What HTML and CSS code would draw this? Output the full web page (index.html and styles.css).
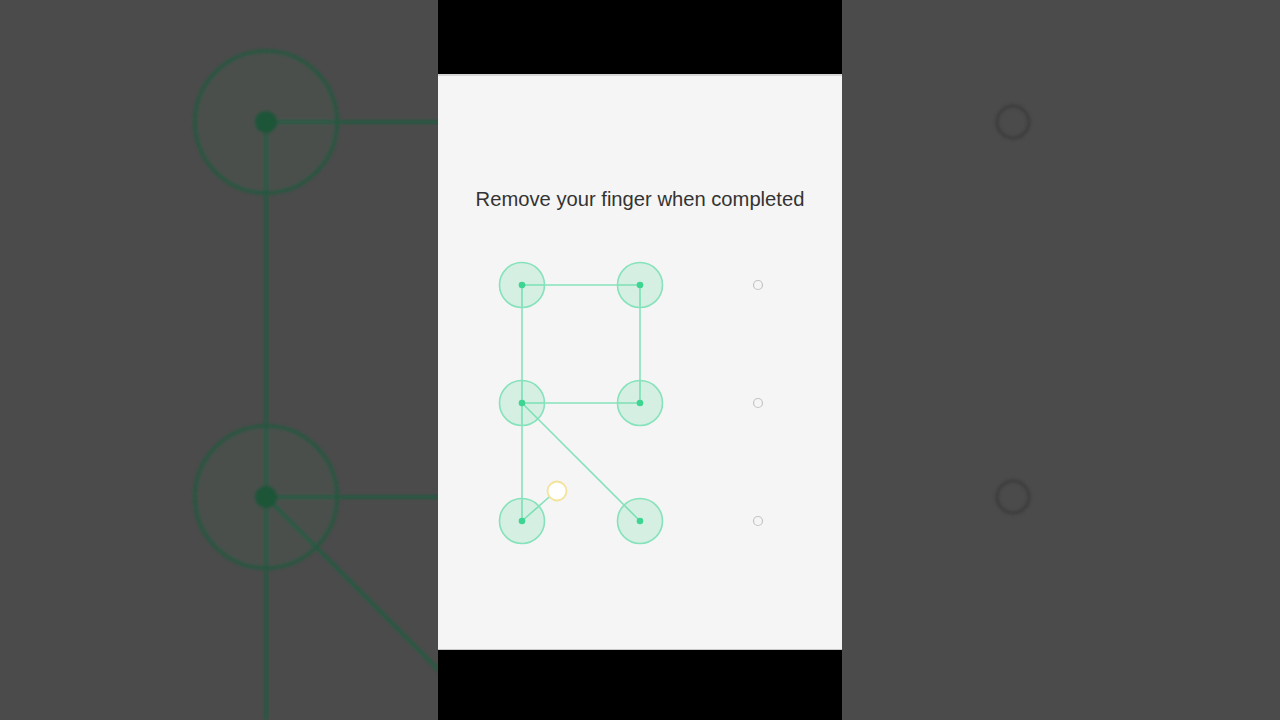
FILE: index.html
```html
<!DOCTYPE html>
<html>
<head>
<meta charset="utf-8">
<link rel="stylesheet" href="styles.css">
</head>
<body>
<svg class="backdrop" width="1280" height="720" viewBox="0 0 1280 720">
  <defs>
    <filter id="soft" x="-10%" y="-10%" width="120%" height="120%">
      <feGaussianBlur stdDeviation="1.5"/>
    </filter>
  </defs>
  <g filter="url(#soft)">
    <line x1="266" y1="122" x2="640" y2="122" stroke="#245a41" stroke-width="3.5"/>
    <line x1="266" y1="122" x2="266" y2="720" stroke="#245a41" stroke-width="3.5"/>
    <line x1="266" y1="497" x2="640" y2="497" stroke="#245a41" stroke-width="3.5"/>
    <line x1="266" y1="497" x2="640" y2="872" stroke="#245a41" stroke-width="3.5"/>
    <circle cx="266" cy="122" r="71" fill="#2f7a57" fill-opacity="0.08" stroke="#25573f" stroke-width="3.5"/>
    <circle cx="266" cy="497" r="71" fill="#2f7a57" fill-opacity="0.08" stroke="#25573f" stroke-width="3.5"/>
    <circle cx="266" cy="122" r="11" fill="#1b5439"/>
    <circle cx="266" cy="497" r="11" fill="#1b5439"/>
    <circle cx="1013" cy="122" r="16" fill="none" stroke="#3c3c3c" stroke-width="3.5"/>
    <circle cx="1013" cy="497" r="16" fill="none" stroke="#3c3c3c" stroke-width="3.5"/>
  </g>
</svg>
<div class="stage">
  <div class="side"></div>
  <div class="phone">
    <div class="bar-top"></div>
    <div class="panel">
      <h1 class="title">Remove your finger when completed</h1>
      <svg class="pattern" width="354" height="354" viewBox="0 0 354 354">
        <g stroke="#86e2bb" stroke-width="1.6" fill="none">
          <line x1="59" y1="59" x2="177" y2="59"/>
          <line x1="177" y1="59" x2="177" y2="177"/>
          <line x1="177" y1="177" x2="59" y2="177"/>
          <line x1="59" y1="59" x2="59" y2="295"/>
          <line x1="59" y1="177" x2="177" y2="295"/>
          <line x1="59" y1="295" x2="93" y2="265"/>
        </g>
        <g fill="#3ed98f" fill-opacity="0.17" stroke="#86e2bb" stroke-width="1.6">
          <circle cx="59" cy="59" r="22.5"/>
          <circle cx="177" cy="59" r="22.5"/>
          <circle cx="59" cy="177" r="22.5"/>
          <circle cx="177" cy="177" r="22.5"/>
          <circle cx="59" cy="295" r="22.5"/>
          <circle cx="177" cy="295" r="22.5"/>
        </g>
        <g fill="#3ed592">
          <circle cx="59" cy="59" r="3.3"/>
          <circle cx="177" cy="59" r="3.3"/>
          <circle cx="59" cy="177" r="3.3"/>
          <circle cx="177" cy="177" r="3.3"/>
          <circle cx="59" cy="295" r="3.3"/>
          <circle cx="177" cy="295" r="3.3"/>
        </g>
        <g fill="none" stroke="#c4c4c4" stroke-width="1.2">
          <circle cx="295" cy="59" r="4.5"/>
          <circle cx="295" cy="177" r="4.5"/>
          <circle cx="295" cy="295" r="4.5"/>
        </g>
        <circle cx="94" cy="265" r="9.5" fill="#ffffff" stroke="#f3e39a" stroke-width="1.8"/>
      </svg>
    </div>
    <div class="bar-bottom"></div>
  </div>
  <div class="side"></div>
</div>
</body>
</html>
```
FILE: styles.css
```css
html, body {
  margin: 0;
  padding: 0;
  width: 1280px;
  height: 720px;
  overflow: hidden;
  background: #4b4b4b;
  font-family: "Liberation Sans", Arial, sans-serif;
}
.backdrop {
  position: absolute;
  left: 0;
  top: 0;
}
.stage {
  position: relative;
  display: flex;
  width: 1280px;
  height: 720px;
}
.side {
  flex: 1;
}
.phone {
  width: 404px;
  display: flex;
  flex-direction: column;
}
.bar-top {
  height: 74px;
  background: #000;
}
.bar-bottom {
  flex: 1;
  background: #000;
  border-top: 1px solid #c9c9c9;
}
.panel {
  height: 573px;
  background: #f5f5f5;
  border-top: 2px solid #d6d6d6;
  display: flex;
  flex-direction: column;
  align-items: center;
}
.title {
  margin: 111px 0 0 0;
  font-size: 20.2px;
  line-height: 24px;
  font-weight: normal;
  color: #333333;
  letter-spacing: 0;
}
.pattern {
  display: block;
  margin-top: 15px;
}
```
